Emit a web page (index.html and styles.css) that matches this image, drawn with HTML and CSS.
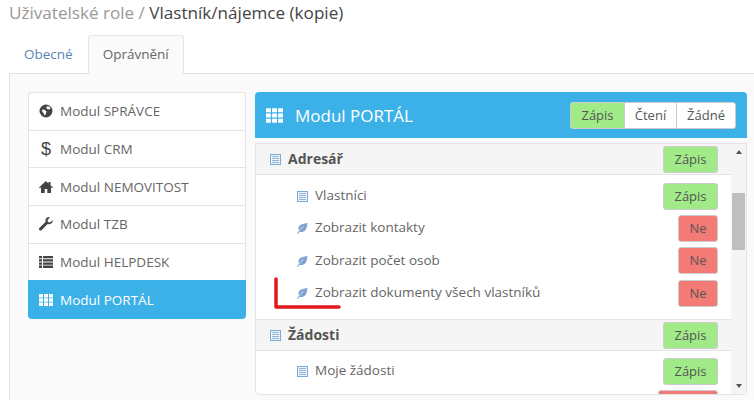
FILE: index.html
```html
<!DOCTYPE html>
<html lang="cs">
<head>
    <meta charset="UTF-8">
    <link rel="stylesheet" href="styles.css">
</head>
<body>
    <svg width="0" height="0" class="icon-defs">
        <symbol id="i-list-alt" viewBox="0 0 11 11">
            <rect x="0.5" y="0.500" width="10" height="10" fill="#eef4fa" stroke="#7ea9d6"/>
            <path d="M2 2h7v1H2zM2 4h7v1H2zM2 6h7v1H2zM2 8h7v1H2z" fill="#8fb3da"/>
        </symbol>
        <symbol id="i-leaf" viewBox="0 0 12 12">
            <path d="M11.500 1C8 2 4 1.800 2.700 5 2.100 6.500 2.400 7.500 3 8.300 4.500 6.300 6.300 5 8.500 4 6.500 5.500 4 7.500 1 11.300l1 .7 1.500-2.200C5.500 10.300 8 10 9.500 8 11 6 11 3.500 11.500 1z" fill="#7ea3cf"/>
        </symbol>
        <symbol id="i-th" viewBox="0 0 14 14">
            <path d="M0 1h4v3.400H0zM5 1h4v3.400H5zM10 1h4v3.400h-4zM0 5.300h4v3.400H0zM5 5.300h4v3.400H5zM10 5.300h4v3.400h-4zM0 9.600h4V13H0zM5 9.600h4V13H5zM10 9.600h4V13h-4z" fill="currentColor"/>
        </symbol>
    </svg>

    <h1 class="page-title"><span class="crumb">Uživatelské role /</span> Vlastník/nájemce (kopie)</h1>

    <div class="tabs">
        <a class="tab">Obecné</a>
        <a class="tab active">Oprávnění</a>
    </div>

    <div class="tab-content">
        <ul class="module-list">
            <li class="module">
                <svg class="module-icon" viewBox="0 0 14 14"><path d="M7 .5a6.500 6.500 0 1 0 0 13 6.500 6.500 0 0 0 0-13zM8 2.200l2.500.3 1 2-1.500 1-2-.5-.8-1.500zM3 5.500l2.500.3 2 1.700-.5 2-1.200 2.300-1-2.300-1.500-1.700z" fill="currentColor" fill-rule="evenodd"/></svg>
                Modul SPRÁVCE
            </li>
            <li class="module">
                <span class="module-icon dollar">$</span>
                Modul CRM
            </li>
            <li class="module">
                <svg class="module-icon" viewBox="0 0 14 14"><path d="M7 1 0 7.500l.8.800L2 7.200V13h3.700V9h2.600v4H12V7.200l1.200 1.100.8-.8-2.500-2.300V2h-2v1.400z" fill="currentColor"/></svg>
                Modul NEMOVITOST
            </li>
            <li class="module">
                <svg class="module-icon" viewBox="0 0 14 14"><path d="M13.600 3.200 11 5.500 9 5 8.500 3l2.600-2.500C9.200-.200 7.300.500 6.700 2c-.4 1-.3 2 0 2.800L.6 10.700c-.8.800-.8 1.700-.2 2.300.6.700 1.600.7 2.300 0l5.900-6c1 .4 2.200.4 3.200-.2 1.500-.8 2.200-2.200 1.800-3.600z" fill="currentColor"/></svg>
                Modul TZB
            </li>
            <li class="module">
                <svg class="module-icon" viewBox="0 0 14 14"><path d="M0 1h3v2.300H0zM4 1h10v2.300H4zM0 4.200h3v2.300H0zM4 4.200h10v2.300H4zM0 7.400h3v2.300H0zM4 7.400h10v2.300H4zM0 10.600h3V13H0zM4 10.600h10V13H4z" fill="currentColor"/></svg>
                Modul HELPDESK
            </li>
            <li class="module active">
                <svg class="module-icon"><use href="#i-th"/></svg>
                Modul PORTÁL
            </li>
        </ul>

        <div class="panel">
            <div class="panel-head">
                <svg class="panel-icon"><use href="#i-th"/></svg>
                <span class="panel-title">Modul PORTÁL</span>
                <div class="btn-group">
                    <span class="seg on">Zápis</span>
                    <span class="seg">Čtení</span>
                    <span class="seg">Žádné</span>
                </div>
            </div>
            <div class="panel-body">
                <div class="rows">
                    <div class="section">
                        <svg class="list-icon"><use href="#i-list-alt"/></svg>
                        <span class="section-name">Adresář</span>
                        <span class="btn green">Zápis</span>
                    </div>
                    <div class="group">
                        <div class="row">
                            <svg class="list-icon"><use href="#i-list-alt"/></svg>
                            <span class="row-name">Vlastníci</span>
                            <span class="btn green">Zápis</span>
                        </div>
                        <div class="row">
                            <svg class="leaf-icon"><use href="#i-leaf"/></svg>
                            <span class="row-name">Zobrazit kontakty</span>
                            <span class="btn red">Ne</span>
                        </div>
                        <div class="row">
                            <svg class="leaf-icon"><use href="#i-leaf"/></svg>
                            <span class="row-name">Zobrazit počet osob</span>
                            <span class="btn red">Ne</span>
                        </div>
                        <div class="row">
                            <svg class="leaf-icon"><use href="#i-leaf"/></svg>
                            <span class="row-name">Zobrazit dokumenty všech vlastníků</span>
                            <span class="btn red">Ne</span>
                        </div>
                    </div>
                    <div class="section">
                        <svg class="list-icon"><use href="#i-list-alt"/></svg>
                        <span class="section-name">Žádosti</span>
                        <span class="btn green">Zápis</span>
                    </div>
                    <div class="group">
                        <div class="row">
                            <svg class="list-icon"><use href="#i-list-alt"/></svg>
                            <span class="row-name">Moje žádosti</span>
                            <span class="btn green">Zápis</span>
                        </div>
                        <div class="row">
                            <span class="row-name"></span>
                            <span class="btn red wide"></span>
                        </div>
                    </div>
                </div>
                <div class="scrollbar">
                    <span class="arrow up"></span>
                    <div class="track"><div class="thumb"></div></div>
                    <span class="arrow down"></span>
                </div>
            </div>
        </div>
    </div>

    <svg class="red-mark" width="70" height="34" viewBox="0 0 70 34">
        <path d="M3 2v28h63" fill="none" stroke="#e21a1a" stroke-width="3.500" stroke-linecap="round" stroke-linejoin="round"/>
    </svg>
</body>
</html>
```

FILE: styles.css
```css
* {
    box-sizing: border-box;
}

html, body {
    height: 400px;
    overflow: hidden;
}

body {
    margin: 0;
    background-color: #fff;
    font-family: "Open Sans", sans-serif;
    font-size: 13.500px;
    color: #666;
    position: relative;
}

.icon-defs {
    display: block;
    height: 0;
}

.page-title {
    margin: 0;
    height: 35px;
    padding: 1px 0 0 9px;
    font-size: 17.100px;
    font-weight: 400;
    line-height: 23px;
    color: #444;
}

.crumb {
    color: #999;
}

.tabs {
    display: flex;
    height: 38px;
    padding-left: 9px;
}

.tab {
    padding: 9px 14px 0;
    line-height: 18px;
    border: 1px solid transparent;
    border-bottom: none;
    color: #5b84b1;
}

.tab.active {
    position: relative;
    height: 39px;
    background-color: #fafafa;
    border-color: #e4e4e4;
    border-radius: 3px 3px 0 0;
    color: #666;
}

.tab-content {
    display: flex;
    align-items: flex-start;
    gap: 9px;
    height: 327px;
    margin-left: 9px;
    padding: 18px 7px 0 18px;
    background-color: #fafafa;
    border-top: 1px solid #e4e4e4;
    border-left: 1px solid #e4e4e4;
}

.module-list {
    width: 218px;
    margin: 0;
    padding: 0;
    list-style: none;
    flex-shrink: 0;
}

.module {
    display: flex;
    align-items: center;
    gap: 7px;
    height: 37.700px;
    padding-left: 10px;
    background-color: #fff;
    border: 1px solid #e4e4e4;
    border-bottom: none;
}

.module:first-child {
    border-radius: 3px 3px 0 0;
}

.module.active {
    height: 39px;
    background-color: #3cb1e8;
    border-color: #3cb1e8;
    border-radius: 0 0 4px 4px;
    color: #fff;
}

.module-icon {
    width: 14px;
    height: 14px;
    flex-shrink: 0;
    color: #444;
}

.module.active .module-icon {
    color: #fff;
}

.dollar {
    font-family: "Liberation Sans", sans-serif;
    font-size: 18px;
    line-height: 14px;
    text-align: center;
}

.panel {
    width: 492px;
    flex-shrink: 0;
}

.panel-head {
    display: flex;
    align-items: center;
    height: 46px;
    padding: 0 11px;
    background-color: #3cb1e8;
    border-radius: 4px 4px 0 0;
    color: #fff;
}

.panel-icon {
    width: 17px;
    height: 17px;
    margin-right: 12px;
}

.panel-title {
    flex-grow: 1;
    font-size: 17px;
}

.btn-group {
    display: flex;
    height: 27px;
    background-color: #fff;
    border: 1px solid #ccc;
    border-radius: 3px;
    color: #555;
    overflow: hidden;
    font-size: 13px;
}

.seg {
    width: 52px;
    line-height: 25px;
    text-align: center;
    border-left: 1px solid #ccc;
}

.seg:first-child {
    width: 53px;
    border-left: none;
}

.seg:last-child {
    width: 59px;
}

.seg.on {
    background-color: #a0ea88;
}

.panel-body {
    display: flex;
    height: 252px;
    margin-top: 5px;
    background-color: #fff;
    border: 1px solid #e4e4e4;
    border-radius: 0 0 4px 4px;
    overflow: hidden;
}

.rows {
    flex-grow: 1;
    min-width: 0;
    overflow: hidden;
}

.section {
    display: flex;
    align-items: center;
    height: 31px;
    padding: 0 13px 0 14px;
    background-color: #f5f5f5;
    border-bottom: 1px solid #e4e4e4;
}

.group + .section {
    border-top: 1px solid #e4e4e4;
    height: 32px;
}

.section-name {
    flex-grow: 1;
    margin-bottom: 2px;
    font-weight: 700;
    font-size: 14px;
    color: #555;
}

.group {
    padding: 5px 0 10px;
}

.row {
    display: flex;
    align-items: center;
    height: 32.300px;
    padding: 0 13px 0 41px;
}

.group + .section + .group {
    padding-top: 4px;
}

.row-name {
    flex-grow: 1;
    margin-bottom: 2px;
}

.list-icon {
    width: 11px;
    height: 11px;
    margin-right: 7px;
    flex-shrink: 0;
}

.leaf-icon {
    width: 12px;
    height: 12px;
    margin-left: -1px;
    margin-right: 7px;
    flex-shrink: 0;
}

.btn {
    height: 27px;
    line-height: 25px;
    text-align: center;
    font-size: 13px;
    color: #555;
    border: 1px solid #ccc;
    border-radius: 3px;
}

.green {
    width: 55px;
    background-color: #a0ea88;
}

.red {
    width: 40px;
    background-color: #f47a75;
}

.red.wide {
    width: 60px;
}

.scrollbar {
    display: flex;
    flex-direction: column;
    align-items: center;
    width: 15px;
    flex-shrink: 0;
    background-color: #f5f5f5;
}

.arrow {
    width: 0;
    height: 0;
    margin: 6px 0;
    border-left: 3.500px solid transparent;
    border-right: 3.500px solid transparent;
}

.arrow.up {
    border-bottom: 4px solid #555;
}

.arrow.down {
    border-top: 4px solid #555;
}

.track {
    flex-grow: 1;
    width: 100%;
    padding: 33px 1px 0;
}

.thumb {
    height: 57px;
    background-color: #bfbfbf;
}

.red-mark {
    position: absolute;
    left: 273px;
    top: 277px;
}
```
